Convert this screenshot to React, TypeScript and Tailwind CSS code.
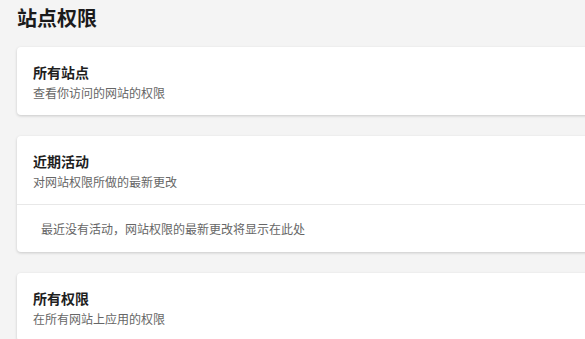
const font = { fontFamily: '"Noto Sans CJK SC", "Liberation Sans", sans-serif' };

function CardHeader({ title, desc }: { title: string; desc: string }) {
  return (
    <div className="h-[68px] px-4 pt-[15px]">
      <div className="text-[14px] leading-[20px] font-bold text-[#1f1f1f]">{title}</div>
      <div className="mt-[2px] text-[12px] leading-[18px] text-[#666666]">{desc}</div>
    </div>
  );
}

export default function App() {
  return (
    <div className="h-[339px] w-[585px] overflow-hidden bg-[#f4f4f4]" style={font}>
      <div className="w-[620px] pl-[17px]">
        <h1 className="pt-[4px] text-[20px] leading-[28px] font-bold text-[#1b1b1b]">站点权限</h1>
        <div className="mt-[15px] flex flex-col gap-[21px]">
          <div className="rounded-[4px] bg-white shadow-[0_1px_3px_rgba(0,0,0,0.18)]">
            <CardHeader title="所有站点" desc="查看你访问的网站的权限" />
          </div>
          <div className="rounded-[4px] bg-white shadow-[0_1px_3px_rgba(0,0,0,0.18)]">
            <CardHeader title="近期活动" desc="对网站权限所做的最新更改" />
            <div className="flex h-[48px] items-center border-t border-[#e8e8e8] pl-6 text-[12px] text-[#666666]">
              最近没有活动，网站权限的最新更改将显示在此处
            </div>
          </div>
          <div className="rounded-[4px] bg-white shadow-[0_1px_3px_rgba(0,0,0,0.18)]">
            <CardHeader title="所有权限" desc="在所有网站上应用的权限" />
          </div>
        </div>
      </div>
    </div>
  );
}
